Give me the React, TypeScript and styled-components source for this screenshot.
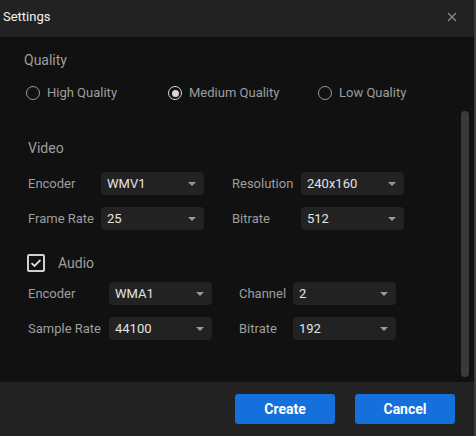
import { Fragment } from "react";
import styled, { createGlobalStyle } from "styled-components";

const GlobalStyle = createGlobalStyle`
  html, body {
    margin: 0;
    padding: 0;
    background: #111111;
  }
  * {
    box-sizing: border-box;
  }
`;

const Dialog = styled.div`
  width: 476px;
  height: 436px;
  display: flex;
  flex-direction: column;
  background: #111111;
  border-right: 2px solid #3c3c3c;
  font-family: Roboto, "Liberation Sans", sans-serif;
`;

// header

const Header = styled.div`
  height: 37px;
  display: flex;
  align-items: center;
  justify-content: space-between;
  padding: 0 15px 4px 3px;
  background: #222222;
`;

const Title = styled.div`
  color: #f2f2f2;
  font-size: 13px;
`;

const CloseButton = styled.button`
  width: 14px;
  height: 14px;
  padding: 0;
  border: none;
  background: transparent;
  display: flex;
  align-items: center;
  justify-content: center;
  cursor: pointer;
`;

// body

const Body = styled.div`
  position: relative;
  flex: 1;
  padding: 14px 0 0 24px;
`;

const ScrollThumb = styled.div`
  position: absolute;
  right: 5px;
  top: 74px;
  width: 8px;
  height: 266px;
  border-radius: 4px;
  background: #3a3a3a;
`;

const SectionTitle = styled.div`
  color: #9e9e9e;
  font-size: 14px;
  line-height: 18px;
`;

const RadioRow = styled.div`
  display: grid;
  grid-template-columns: 142px 150px auto;
  margin-top: 15px;
  padding-left: 2px;
`;

const RadioOption = styled.label`
  display: flex;
  align-items: center;
  gap: 7px;
  color: #9e9e9e;
  font-size: 13px;
  line-height: 18px;
  cursor: pointer;
`;

const RadioCircle = styled.span<{ $checked: boolean }>`
  width: 14px;
  height: 14px;
  border-radius: 50%;
  border: 1.5px solid ${(p) => (p.$checked ? "#d8d8d8" : "#9a9a9a")};
  display: flex;
  align-items: center;
  justify-content: center;
  &::after {
    content: "";
    display: ${(p) => (p.$checked ? "block" : "none")};
    width: 7px;
    height: 7px;
    border-radius: 50%;
    background: #d8d8d8;
  }
`;

const Section = styled.div<{ $top: number }>`
  margin-top: ${(p) => p.$top}px;
  padding-left: 4px;
`;

const FieldGrid = styled.div<{ $cols: string; $top: number }>`
  display: grid;
  grid-template-columns: ${(p) => p.$cols};
  row-gap: 12px;
  align-items: center;
  margin-top: ${(p) => p.$top}px;
`;

const FieldLabel = styled.div<{ $pad: number }>`
  padding-left: ${(p) => p.$pad}px;
  color: #9e9e9e;
  font-size: 13px;
  white-space: nowrap;
`;

const Select = styled.div`
  height: 23px;
  display: flex;
  align-items: center;
  justify-content: space-between;
  padding: 0 8px 0 6px;
  border-radius: 4px;
  background: #222222;
  color: #e4e4e4;
  font-size: 13px;
`;

const Caret = styled.span`
  width: 0;
  height: 0;
  border-left: 4px solid transparent;
  border-right: 4px solid transparent;
  border-top: 4px solid #9a9a9a;
`;

const CheckRow = styled.label`
  display: flex;
  align-items: center;
  gap: 13px;
  color: #9e9e9e;
  font-size: 14px;
  margin-left: -1px;
`;

const CheckBox = styled.span`
  width: 18px;
  height: 18px;
  border: 2px solid #d0d0d0;
  border-radius: 2px;
  display: flex;
  align-items: center;
  justify-content: center;
`;

// footer

const Footer = styled.div`
  height: 54px;
  display: flex;
  align-items: center;
  justify-content: flex-end;
  gap: 20px;
  padding: 0 19px 0 0;
  background: #222222;
`;

const Button = styled.button`
  width: 100px;
  height: 30px;
  border: none;
  border-radius: 3px;
  background: #1670dc;
  color: #ffffff;
  font-family: Roboto, "Liberation Sans", sans-serif;
  font-size: 14px;
  font-weight: 700;
  cursor: pointer;
`;

type Field = { label: string; value: string };

const FieldSelect = ({ value }: { value: string }) => (
  <Select>
    <span>{value}</span>
    <Caret />
  </Select>
);

const Fields = ({
  cols,
  top,
  gap,
  items,
}: {
  cols: string;
  top: number;
  gap: number;
  items: Field[];
}) => (
  <FieldGrid $cols={cols} $top={top}>
    {items.map((f, i) => (
      <Fragment key={f.label + i}>
        <FieldLabel $pad={i % 2 === 1 ? gap : 0}>{f.label}</FieldLabel>
        <FieldSelect value={f.value} />
      </Fragment>
    ))}
  </FieldGrid>
);

const qualities = ["High Quality", "Medium Quality", "Low Quality"];

export default function App() {
  return (
    <>
      <GlobalStyle />
      <Dialog>
        <Header>
          <Title>Settings</Title>
          <CloseButton>
            <svg width="10" height="10" viewBox="0 0 10 10">
              <path d="M1 1L9 9M9 1L1 9" stroke="#8a8a8a" strokeWidth="1.3" />
            </svg>
          </CloseButton>
        </Header>
        <Body>
          <SectionTitle>Quality</SectionTitle>
          <RadioRow>
            {qualities.map((q) => (
              <RadioOption key={q}>
                <RadioCircle $checked={q === "Medium Quality"} />
                {q}
              </RadioOption>
            ))}
          </RadioRow>

          <Section $top={37}>
            <SectionTitle>Video</SectionTitle>
            <Fields
              cols="73px 103px 97px 103px"
              top={15}
              gap={28}
              items={[
                { label: "Encoder", value: "WMV1" },
                { label: "Resolution", value: "240x160" },
                { label: "Frame Rate", value: "25" },
                { label: "Bitrate", value: "512" },
              ]}
            />
          </Section>

          <Section $top={24}>
            <CheckRow>
              <CheckBox>
                <svg width="12" height="10" viewBox="0 0 12 10">
                  <path d="M1.5 5.2L4.5 8L10.5 1.8" stroke="#e0e0e0" strokeWidth="1.8" fill="none" />
                </svg>
              </CheckBox>
              Audio
            </CheckRow>
            <Fields
              cols="81px 103px 81px 103px"
              top={10}
              gap={27}
              items={[
                { label: "Encoder", value: "WMA1" },
                { label: "Channel", value: "2" },
                { label: "Sample Rate", value: "44100" },
                { label: "Bitrate", value: "192" },
              ]}
            />
          </Section>
          <ScrollThumb />
        </Body>
        <Footer>
          <Button>Create</Button>
          <Button>Cancel</Button>
        </Footer>
      </Dialog>
    </>
  );
}
